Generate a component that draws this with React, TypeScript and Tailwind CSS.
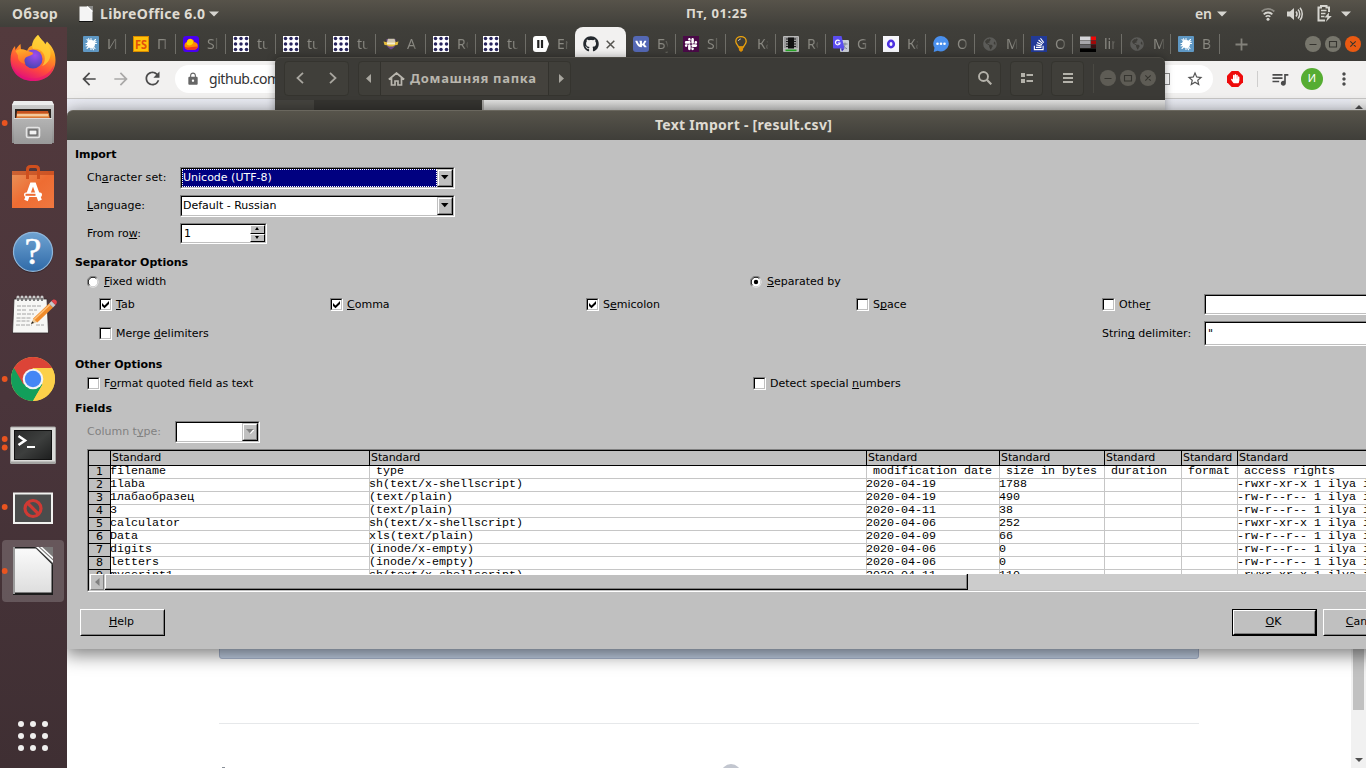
import React from "react";
import { FaGithub, FaVk, FaSlack, FaStackOverflow, FaGlobeAmericas, FaHandPaper } from "react-icons/fa";
import { MdArrowBack, MdArrowForward, MdRefresh, MdLock, MdStarBorder, MdMoreVert, MdQueueMusic } from "react-icons/md";

/* ---------- tab favicons (16x16) ---------- */

function Dots() {
  const p = [2.5, 8, 13.5];
  return (
    <svg width="16" height="16" viewBox="0 0 16 16" className="block">
      <rect width="16" height="16" fill="#fff" />
      {p.map((x) => p.map((y) => <circle key={x + "-" + y} cx={x} cy={y} r="1.75" fill="#26235c" />))}
    </svg>
  );
}

function Splash() {
  return (
    <svg width="16" height="16" viewBox="0 0 16 16" className="block">
      <rect width="16" height="16" rx="1" fill="#5f98c4" />
      <circle cx="8" cy="8" r="4" fill="#fff" />
      <path
        d="M8 2.500v11M3 7.500h10.500M4 3.500l8 9M12.500 3.500L4 12.500M5.500 2.700l5 11M3 10l10-4.500"
        stroke="#fff"
        strokeWidth="1.100"
        strokeLinecap="round"
      />
    </svg>
  );
}

function Favicon({ kind }: { kind: string }) {
  switch (kind) {
    case "dots":
      return <Dots />;
    case "splash":
      return <Splash />;
    case "fs":
      return (
        <svg width="16" height="16" viewBox="0 0 16 16" className="block">
          <rect width="16" height="16" fill="#d98a00" />
          <rect x="1" y="1" width="14" height="14" fill="#ffc20a" />
          <text x="8" y="12.500" textAnchor="middle" fontSize="12" fontWeight="700" textLength="12" lengthAdjust="spacingAndGlyphs" fill="#e2500c" fontFamily="Open Sans, sans-serif">FS</text>
        </svg>
      );
    case "cloud":
      return (
        <svg width="16" height="16" viewBox="0 0 16 16" className="block">
          <rect width="16" height="16" rx="3" fill="#4a00f0" />
          <path d="M1.500 9.500c0-2 1-3 2.300-3.200C4.300 3.500 6.500 2.200 8.300 3c1.800.3 2.500 1.700 3 3 2 .3 3.500 1.500 3.500 4 0 2.200-1.500 3.500-3.500 3.500H5c-2 0-3.500-1.500-3.500-4z" fill="#ff8a00" />
          <path d="M3.500 7.500c.5-3.500 2.500-5 4.800-4.200 2 .7 2.200 3.500 1.200 4.700-1.500 2-5.500 2-6-.5z" fill="#ffd500" />
          <path d="M1.500 10.500c2 1.500 5 1 7.500.5 2 0 4-.5 5.700-.5-.2 2-1.500 3.200-3.400 3.200H5c-1.800 0-3.300-1.300-3.500-3.200z" fill="#f4361c" />
        </svg>
      );
    case "crest":
      return (
        <svg width="16" height="16" viewBox="0 0 16 16" className="block">
          <path d="M3.500 3h9v5c0 2.500-2 4.500-4.500 5.500C5.500 12.500 3.500 10.500 3.500 8z" fill="#6b4a8c" />
          <path d="M5 2.800h6.500l1 3.200H4z" fill="#cfc6b0" />
          <path d="M.5 5.500l3.500.8h8l3.500-.8-1 3.500-2.500.2-2 1.300H6l-2-1.300-2.500-.2z" fill="#e3bb3c" />
          <rect x="4" y="6.300" width="8" height="2.200" fill="#f5efd2" />
        </svg>
      );
    case "pause":
      return (
        <svg width="16" height="16" viewBox="0 0 16 16" className="block">
          <path d="M3 0h8.500c1 0 1.500.5 2 1.300L16 8l-2.500 6.700c-.5.8-1 1.300-2 1.300H3c-2 0-3-1-3-3V3c0-2 1-3 3-3z" fill="#fff" />
          <path d="M5.300 4v8M9 4v8" stroke="#222" strokeWidth="2.200" />
        </svg>
      );
    case "vk":
      return (
        <span className="flex size-4 items-center justify-center rounded-[3px] bg-[#5468b4] text-white">
          <FaVk size={12} />
        </span>
      );
    case "slack":
      return (
        <span className="flex size-4 items-center justify-center bg-[#4a0a48] text-white">
          <FaSlack size={14} />
        </span>
      );
    case "bulb":
      return (
        <svg width="16" height="16" viewBox="0 0 16 16" className="block" fill="none">
          <path d="M5.500 11C5 9 2.800 8 2.800 5.200 2.800 2.300 5.300.7 8 .7s5.200 1.600 5.200 4.500C13.200 8 11 9 10.500 11z" stroke="#f0a50c" strokeWidth="1.300" />
          <path d="M5.500 5c.2-1.200 1-1.900 2.200-2" stroke="#ddd" />
          <path d="M5.500 11h5l-.6 3.500L8 16l-1.900-1.500z" fill="#e09208" />
        </svg>
      );
    case "chip":
      return (
        <svg width="16" height="16" viewBox="0 0 16 16" className="block">
          <rect width="16" height="16" rx="1" fill="#b9b9b9" />
          <rect x="1" y="1" width="14" height="11" fill="#9a9a9a" />
          <path d="M3 3h10M3 5.500h10M3 8h10M3 10.500h10" stroke="#222" strokeWidth="1.200" />
          <rect x="5" y="1.500" width="6" height="11" fill="#111" />
          <rect x="2.500" y="13.500" width="11" height="1.700" fill="#26a526" />
        </svg>
      );
    case "translate":
      return (
        <svg width="16" height="16" viewBox="0 0 16 16" className="block">
          <rect x="7" y="4" width="9" height="12" rx="1" fill="#c9cdd6" />
          <path d="M9.500 8h5M12 6.500V8c0 2-1 3.500-2.500 4.500M10.300 9.500c1 1.800 2 2.500 3.700 3.200" stroke="#7b8494" strokeWidth="1" fill="none" />
          <path d="M1 0h7.500l3 12.500H1c-.6 0-1-.4-1-1V1c0-.6.400-1 1-1z" fill="#5b4df0" />
          <path d="M8 12.500h3.500L9 15.500z" fill="#3b2fc0" />
          <path d="M6.600 5.100A2.300 2.300 0 1 0 7 7H4.800" stroke="#fff" strokeWidth="1.200" fill="none" />
        </svg>
      );
    case "ring":
      return (
        <svg width="16" height="16" viewBox="0 0 16 16" className="block">
          <rect width="16" height="16" fill="#f6f6fb" />
          <ellipse cx="8" cy="8" rx="2.800" ry="3.200" stroke="#4b2fe0" strokeWidth="2.600" fill="none" />
        </svg>
      );
    case "chat":
      return (
        <svg width="16" height="16" viewBox="0 0 16 16" className="block">
          <path d="M8 0a8 7.700 0 1 1-3.300 14.800L.7 16l.8-4.200A7.700 7.700 0 0 1 8 0z" fill="#4a90ee" />
          <circle cx="4.500" cy="7.700" r="1.300" fill="#fff" />
          <circle cx="8" cy="7.700" r="1.300" fill="#fff" />
          <circle cx="11.500" cy="7.700" r="1.300" fill="#fff" />
        </svg>
      );
    case "globe":
      return <FaGlobeAmericas size={14} className="m-px text-[#5b5b58]" />;
    case "stack":
      return (
        <span className="flex size-4 items-center justify-center bg-[#223a97] text-white">
          <FaStackOverflow size={14} />
        </span>
      );
    case "flag":
      return (
        <svg width="16" height="16" viewBox="0 0 16 16" className="block">
          <rect width="10.500" height="3.700" y="0.500" fill="#d4d4d8" />
          <rect width="10.500" height="3.500" y="4.500" fill="#a8a8ac" />
          <rect width="10.500" height="3.500" y="8.500" fill="#66666a" />
          <rect width="16" height="3.500" y="12.500" fill="#000" />
          <rect x="11" y="0.500" width="5" height="3.500" fill="#f00808" />
          <rect x="11" y="4.500" width="5" height="3.500" fill="#a10808" />
          <rect x="11" y="8.500" width="5" height="3.500" fill="#3c1012" />
        </svg>
      );
  }
  return null;
}

const leftTabs: [string, string][] = [
  ["splash", "И"], ["fs", "П"], ["cloud", "Sl"], ["dots", "tu"], ["dots", "tu"],
  ["dots", "tu"], ["crest", "A"], ["dots", "Ro"], ["dots", "tu"], ["pause", "En"],
];
const midTabs: [string, string][] = [
  ["vk", "Бу"], ["slack", "Sl"], ["bulb", "Ка"], ["chip", "Ro"], ["translate", "G"], ["ring", "Ка"], ["chat", "О"],
];
const rightTabs: [string, string][] = [
  ["globe", "М"], ["stack", "O"], ["flag", "lin"], ["globe", "М"], ["splash", "В"],
];

function Tab({ kind, label, narrow, last }: { kind: string; label: string; narrow?: boolean; last?: boolean }) {
  return (
    <div className={"flex h-5 shrink-0 items-center pl-[7px] " + (narrow ? "w-[49px]" : "w-[50px]") + (last ? "" : " border-r border-[#6f6e68]")}>
      <Favicon kind={kind} />
      <span className="ml-2 w-[11px] overflow-hidden whitespace-nowrap font-['Noto_Sans'] text-[14px] leading-5 text-[#8a8982] [mask-image:linear-gradient(90deg,#000_55%,rgba(0,0,0,0.25))]">
        {label}
      </span>
    </div>
  );
}

/* ---------- window controls ---------- */

function Controls({ dim }: { dim?: boolean }) {
  const ring = dim ? "#5e5c55" : "#77766c";
  const line = "#35342f";
  return (
    <svg width="58" height="18" viewBox="0 0 58 18" className="block shrink-0">
      <circle cx="9" cy="9" r="8" fill={ring} />
      <circle cx="29" cy="9" r="8" fill={ring} />
      <circle cx="49" cy="9" r="8" fill={dim ? ring : "#ea5a12"} />
      <path d="M5.500 9.500h7M25.500 6.500h7v5.500h-7zM46.300 6.300l5.400 5.400M51.700 6.300l-5.400 5.400" stroke={line} strokeWidth="1.100" fill="none" />
    </svg>
  );
}

/* ---------- top bar ---------- */

function Caret() {
  return (
    <svg width="10" height="6" viewBox="0 0 10 6" className="block">
      <path d="M0 .5h10L5 5.500z" fill="#d6d5d0" />
    </svg>
  );
}

function TopBar() {
  return (
    <div className="relative z-40 flex h-[27px] w-full items-center bg-linear-to-b from-[#57534a] to-[#403f3a] font-['Noto_Sans'] text-[14px] font-bold text-[#dfdbd2]">
      <span className="ml-3 w-[67px] text-[14px] tracking-[0.3px]">Обзор</span>
      <svg width="14" height="16" viewBox="0 0 14 16" className="block">
        <path d="M.5.500h9l4 4v11H.5z" fill="#f4f4f4" />
        <path d="M8 0h6v6z" fill="#8c8c8a" />
        <path d="M8 .5l5.500 5" stroke="#fff" strokeWidth="1.200" />
        <path d="M0 15.500h14" stroke="#111" />
      </svg>
      <span className="ml-[7px] w-[106px] whitespace-nowrap tracking-[0.32px]">LibreOffice 6.0</span>
      <span className="ml-[3px]"><Caret /></span>
      <span className="ml-[467px] w-[64px] whitespace-nowrap text-[13px] tracking-[0.6px]">Пт, 01:25</span>
      <span className="ml-auto mr-[5px] font-semibold">en</span>
      <Caret />
      <svg width="14" height="14" viewBox="0 0 14 14" fill="none" className="ml-[34px] block">
        <path d="M.7 4.500a9 9 0 0 1 12.600 0" stroke="#8d8b84" strokeWidth="1.800" />
        <path d="M2.700 7.300a6 6 0 0 1 8.600 0" stroke="#d6d5d0" strokeWidth="1.800" />
        <path d="M4.700 9.800a3.200 3.200 0 0 1 4.600 0" stroke="#d6d5d0" strokeWidth="1.600" />
        <circle cx="7" cy="12.200" r="1.500" fill="#d6d5d0" />
      </svg>
      <svg width="16" height="14" viewBox="0 0 16 14" fill="none" className="ml-[12px] block">
        <path d="M0 4.500h3L7 1v12L3 9.500H0z" fill="#d6d5d0" />
        <path d="M9 4.500c1.200 1.400 1.200 3.600 0 5M11 2.500c2.300 2.500 2.300 6.500 0 9M13 .8c3 3.500 3 8.900 0 12.400" stroke="#d6d5d0" strokeWidth="1.500" />
      </svg>
      <svg width="15" height="17" viewBox="0 0 15 17" fill="none" className="ml-[14px] block">
        <path d="M12 7V2.500H9.500V1H4v1.500H1.500v13H8" stroke="#d6d5d0" strokeWidth="2" />
        <path d="M4 5.500h5.500M4 8.500h4.500M4 11.500h3.500" stroke="#d6d5d0" strokeWidth="1.700" />
        <path d="M12 7.500L7.500 12.600h3L8.800 17l6-6h-3z" fill="#d6d5d0" />
      </svg>
      <span className="ml-[9px] mr-[15px]"><Caret /></span>
    </div>
  );
}

/* ---------- dock ---------- */

function DockItem({ dots = [], active, children }: { dots?: number[]; active?: boolean; children: React.ReactNode }) {
  return (
    <svg width="67" height="64" viewBox="0 0 67 64" className="block shrink-0">
      {active && <rect x="2" y="1" width="62" height="62" rx="4" fill="#fff" fillOpacity="0.180" />}
      {dots.map((y) => <circle key={y} cx="4.700" cy={y} r="2.900" fill="#e95420" />)}
      {children}
    </svg>
  );
}

function Dock() {
  return (
    <div className="flex w-[67px] shrink-0 flex-col bg-linear-to-b from-[#533a3d] via-[#4a353b] to-[#3f2f33]">
      <svg width="0" height="0" className="absolute">
        <defs>
          <linearGradient id="ff" x1="0.800" y1="0" x2="0.400" y2="1">
            <stop offset="0" stopColor="#fff44f" /><stop offset="0.350" stopColor="#ffa01e" /><stop offset="0.700" stopColor="#ff4a3c" /><stop offset="1" stopColor="#e2107a" />
          </linearGradient>
          <linearGradient id="ff2" x1="0" y1="0" x2="0.300" y2="1">
            <stop offset="0" stopColor="#ffb52a" /><stop offset="1" stopColor="#ff6a2a" />
          </linearGradient>
          <radialGradient id="ffp" cx="0.600" cy="0.300" r="0.700">
            <stop offset="0" stopColor="#a04cf0" /><stop offset="1" stopColor="#4a45b4" />
          </radialGradient>
          <linearGradient id="cab" x1="0" y1="0" x2="0" y2="1"><stop offset="0" stopColor="#d2d2d2" /><stop offset="1" stopColor="#8c8c8c" /></linearGradient>
          <linearGradient id="front" x1="0" y1="0" x2="0" y2="1"><stop offset="0" stopColor="#b4b4b4" /><stop offset="1" stopColor="#999" /></linearGradient>
          <linearGradient id="bag" x1="0" y1="0" x2="1" y2="1"><stop offset="0" stopColor="#e8935a" /><stop offset="0.500" stopColor="#ee6c32" /><stop offset="1" stopColor="#f07840" /></linearGradient>
          <linearGradient id="hlp" x1="0" y1="0" x2="0" y2="1"><stop offset="0" stopColor="#6fa3d2" /><stop offset="1" stopColor="#2f6aa8" /></linearGradient>
          <linearGradient id="scr" x1="0" y1="0" x2="1" y2="1"><stop offset="0" stopColor="#2a2b2b" /><stop offset="0.500" stopColor="#3d3f3e" /><stop offset="1" stopColor="#1e1f1f" /></linearGradient>
          <linearGradient id="pap" x1="0" y1="0" x2="0" y2="1"><stop offset="0" stopColor="#fafafa" /><stop offset="1" stopColor="#dedede" /></linearGradient>
        </defs>
      </svg>

      <DockItem>
        <path d="M38 8c1.500 2 3 4.500 5.500 6.500 1 1 1.500 2 1.500 3l2-3c5 5 8.500 10 8.500 18.500C55.500 46 46 54 33 54S10.500 45 10.500 32.500C10.500 27 12 22 15 19l.5 4c1.500-2.500 3-4.500 5-6l.5 5.500c2 0 4 .5 6 1.500 1-3 3-5 5-5.500 1-4 3-8 6-10.500z" fill="url(#ff)" />
        <path d="M11 34c1.500 8 8 15.500 17 17 12 2 22-4 26-13-1 10-9 16-21 16-13 0-22-9-22-20z" fill="#e2107a" fillOpacity="0.450" />
        <path d="M38 8c-5 4-7 9-5 14 4-1 8 1 10 4 3 4 2 10-1 13 5-2 8-6 8.500-11 .5-5-1-8-4-11l-1.500.5c0-2-4-5-7-9.500z" fill="#ffcf36" fillOpacity="0.800" />
        <circle cx="33" cy="32" r="9.500" fill="url(#ffp)" />
        <path d="M15.500 24c3-2 7-2.500 11-.5l6 2c1 .5.500 2-1 2.500l-5 2c-3 2-2 5-1 7-6-1-8-5-7.500-8.500z" fill="url(#ff2)" />
      </DockItem>

      <DockItem dots={[32]}>
        <path d="M14 10h38l2 4v38H12V14z" fill="url(#cab)" />
        <path d="M14 10h38l2 4H12z" fill="#ededed" />
        <rect x="15" y="18" width="36" height="9" fill="#2b2521" />
        <path d="M17 20h31l2 7H16z" fill="#c65220" />
        <path d="M17 22.500h32v4H17z" fill="#e89a54" />
        <path d="M17 24h31" stroke="#fbe8cf" strokeWidth="1.200" />
        <rect x="14" y="27" width="38" height="26" fill="url(#front)" />
        <path d="M14 27.500h38" stroke="#dcdcdc" />
        <rect x="26.500" y="36.500" width="13" height="10" rx="1.500" fill="#9a9a9a" stroke="#e4e4e4" strokeWidth="1.600" />
        <rect x="29" y="39" width="8" height="5" fill="#f2f2f2" stroke="#555" />
      </DockItem>

      <DockItem>
        <path d="M12 16h42v37H12z" fill="url(#bag)" />
        <path d="M12 16h42v4H12z" fill="#b8431a" fillOpacity="0.600" />
        <path d="M27.500 24V14.500c0-2 1-3 3-3h5c2 0 3 1 3 3V24" stroke="#cf4f1e" strokeWidth="3" fill="none" />
        <path d="M26 45.500L31.700 29.500h2.600L40 45.500" stroke="#fff" strokeWidth="3.800" fill="none" />
        <rect x="24" y="37.500" width="18" height="4.500" rx="2" fill="#fff" />
        <rect x="25.500" y="38.800" width="10" height="2" fill="#ee6c32" />
      </DockItem>

      <DockItem>
        <circle cx="33" cy="34" r="20" fill="#1d1416" fillOpacity="0.400" />
        <circle cx="33" cy="32.800" r="19.500" fill="url(#hlp)" stroke="#8fb6da" strokeWidth="1.200" />
        <text x="33" y="45" textAnchor="middle" fontSize="38" fill="#fff" stroke="#fff" strokeWidth="0.500" fontFamily="Liberation Serif, serif">?</text>
      </DockItem>

      <DockItem>
        <path d="M14 16h33l1.500 34h-36z" fill="#f7f7f5" stroke="#2e2628" strokeWidth="0.800" />
        <path d="M18 16v-2M22 16v-2M26 16v-2M30 16v-2M34 16v-2M38 16v-2M42 16v-2" stroke="#ccc" strokeWidth="3" strokeLinecap="round" />
        <path d="M18 18v-3M22 18v-3M26 18v-3M30 18v-3M34 18v-3M38 18v-3M42 18v-3" stroke="#444" strokeWidth="1.300" />
        <path d="M17 23h25M17 27h10M29 27h8M17 31h17M16.500 35h15M16.500 38h13M16 42h16M36 42h8" stroke="#a4a4a4" strokeWidth="1" strokeDasharray="4 1" />
        <path d="M31 41l2.500-6 4 4z" fill="#e9c99a" />
        <path d="M31 41l1.200-2.800 1.800 1.800z" fill="#222" />
        <path d="M33.200 35.500L49 20.500l4 4-15.700 15z" fill="#f08c2c" />
        <path d="M34.200 36.500L50 21.500" stroke="#ffc37c" strokeWidth="1.400" />
        <path d="M49 20.500l2.500-2.500 4 4-2.500 2.500z" fill="#c9c9c9" />
        <path d="M51.500 18c1-1.500 3-2 4.500-.8 1.500 1.300 1 3.300-.5 4.800z" fill="#e2444a" />
      </DockItem>

      <DockItem dots={[32]}>
        <circle cx="33" cy="32" r="22" fill="#fcd04a" />
        <path d="M33 32L13.950 21A22 22 0 0 0 33 54l9.500-16.500z" fill="#129f5b" />
        <path d="M13.950 21A22 22 0 0 1 52.050 21H33L23.500 37.500z" fill="#dc4437" />
        <path d="M33 54A22 22 0 0 0 52.050 21H33l9.500 16.500z" fill="#fcd04a" />
        <circle cx="33" cy="32" r="10.300" fill="#f3f3f3" />
        <circle cx="33" cy="32" r="8.200" fill="#4486f5" />
      </DockItem>

      <DockItem dots={[28, 36.500]}>
        <rect x="10" y="15.500" width="46" height="37.500" rx="1.500" fill="#a5a5a3" />
        <rect x="11" y="16.500" width="44" height="34" fill="#dcdcda" />
        <rect x="14" y="19" width="38" height="30" fill="#111" />
        <rect x="15" y="20" width="36" height="28" fill="url(#scr)" />
        <path d="M18.500 25l6.500 4.500-6.500 4.500" stroke="#fff" strokeWidth="2.600" fill="none" />
        <path d="M27 36h8" stroke="#fff" strokeWidth="2" />
      </DockItem>

      <DockItem dots={[32]}>
        <rect x="13" y="17.500" width="40" height="31.500" fill="#f2f2f0" />
        <rect x="15" y="19.500" width="36" height="27.500" fill="#4b4c4c" />
        <circle cx="33" cy="33.500" r="8" stroke="#cf3a34" strokeWidth="3.200" fill="none" />
        <path d="M27.500 28l11 11" stroke="#cf3a34" strokeWidth="3.200" />
      </DockItem>

      <DockItem dots={[32]} active>
        <path d="M13 8h40v48H13z" fill="#1c1c1c" />
        <path d="M13 8h2v47h-2z" fill="#9b9b9b" />
        <path d="M15 9.500h21L51.500 25v28.500H15z" fill="url(#pap)" />
        <path d="M36 8h17v17z" fill="#7a7878" />
        <path d="M34.500 8H38l15 14.500V26z" fill="#444" />
        <path d="M36 8h2.500L53 21.500V24z" fill="#fff" />
        <path d="M40 8h2.200L53 18v2z" fill="#fff" />
      </DockItem>

      <svg width="67" height="64" viewBox="0 0 67 64" className="mt-auto block shrink-0">
        {[21, 33, 45].map((x) => [20, 32, 44].map((y) => <circle key={x + "-" + y} cx={x} cy={y} r="3" fill="#f0efee" />))}
      </svg>
    </div>
  );
}

/* ---------- browser ---------- */

function Browser() {
  return (
    <div className="relative flex h-full min-w-0 flex-1 flex-col bg-white">
      <div className="flex h-[34px] shrink-0 items-center bg-linear-to-b from-[#403f3a] to-[#3b3a36] pl-[9px]">
        {leftTabs.map(([k, l], i) => <Tab key={i} kind={k} label={l} />)}
        <div className="-ml-px flex h-[34px] w-[51px] shrink-0 items-center rounded-t-lg bg-[#f2f1f0] pl-2 text-[#24292e]">
          <FaGithub size={16} />
          <svg width="9" height="9" viewBox="0 0 9 9" className="ml-[7px] block">
            <path d="M.7.700l7.600 7.600M8.300.700L.7 8.300" stroke="#55544f" strokeWidth="1.500" />
          </svg>
        </div>
        {midTabs.map(([k, l], i) => <Tab key={i} kind={k} label={l} narrow={i === 6} />)}
        {rightTabs.map(([k, l], i) => <Tab key={i} kind={k} label={l} narrow />)}
        <svg width="13" height="13" viewBox="0 0 13 13" className="ml-[15px] block shrink-0">
          <path d="M6.500.500v12M.5 6.500h12" stroke="#83827b" strokeWidth="1.800" />
        </svg>
        <div className="ml-auto mr-[4px]"><Controls /></div>
      </div>
      <div className="flex h-[38px] shrink-0 items-center border-b border-[#c9c8c7] bg-[#f2f1f0] pb-[2px] pl-[12px] text-[#4b4b4b]">
        <MdArrowBack size={20} />
        <MdArrowForward size={20} className="ml-[12px] text-[#a9a8a7]" />
        <MdRefresh size={21} className="ml-[11px]" />
        <div className="ml-[12px] flex h-7 w-[1038px] items-center rounded-full bg-white pl-[11px] pr-[9px]">
          <MdLock size={14} className="text-[#666]" />
          <span className="ml-[9px] font-['Noto_Sans'] text-[14px] tracking-[-0.45px] text-[#333]">github.com</span>
          <span className="ml-auto mr-[16px] size-3 border border-[#888] text-[8px]" />
          <MdStarBorder size={18} className="text-[#555]" />
        </div>
        <svg width="16" height="16" viewBox="0 0 16 16" className="ml-[14px] block">
          <path d="M4.700 0h6.600L16 4.700v6.600L11.300 16H4.700L0 11.300V4.700z" fill="#ee0b0b" />
          <g transform="translate(3.500 3)"><FaHandPaper size={9.5} color="#fff" /></g>
        </svg>
        <span className="ml-[14px] h-4 w-px bg-[#cfcecd]" />
        <MdQueueMusic size={20} className="ml-[12px]" />
        <span className="ml-[11px] flex size-[22px] items-center justify-center rounded-full bg-[#56ad32] font-['Noto_Sans'] text-[11px] text-white">И</span>
        <MdMoreVert size={20} className="ml-[11px]" />
      </div>
      <div className="flex min-h-0 flex-1">
        <div className="flex flex-1 flex-col bg-linear-to-b from-[#eceef6] via-white via-10% to-white pl-[152px]">
          <div className="mt-[40px] h-[520px] w-[980px] shrink-0 rounded-[3px] border border-[#a9b6cf] bg-[#c3d1e6]" />
          <div className="mt-[64px] h-px w-[980px] bg-[#e6e8ea]" />
          <div className="mt-[40px] flex h-1 w-[980px] overflow-hidden pl-[3px]">
            <div className="mt-[3px] h-px w-[3px] bg-[#8a9099]" />
            <div className="ml-[496px] h-5 w-5 shrink-0 rounded-full bg-[#c2c6cf]" />
          </div>
        </div>
        <div className="flex w-[15px] flex-col items-center bg-[#f1f1f1] pt-[6px]">
          <svg width="8" height="4" viewBox="0 0 8 4" className="block"><path d="M4 0l4 4H0z" fill="#505050" /></svg>
          <div className="mt-[4px] h-[597px] w-[11px] bg-[#c1c1c1]" />
          <svg width="8" height="4" viewBox="0 0 8 4" className="mt-auto mb-[6px] block"><path d="M0 0h8L4 4z" fill="#505050" /></svg>
        </div>
      </div>
    </div>
  );
}

/* ---------- file manager ---------- */

function Files() {
  return (
    <div className="absolute left-[275px] top-[57px] flex h-[80px] w-[890px] flex-col overflow-hidden rounded-t-md border-t border-[#4c4a44] bg-[#3c3b37] shadow-[0_0_8px_rgba(0,0,0,0.35)]">
      <div className="flex h-[42px] shrink-0 items-center pb-[2px] pl-[9px] text-[#a8a69f]">
        <div className="flex h-[35px] w-[65px] items-center justify-between rounded-[4px] border border-[#35342f] bg-[#403f3a] px-[11px]">
          <svg width="8" height="12" viewBox="0 0 8 12"><path d="M7 .8L1.500 6 7 11.200" stroke="currentColor" strokeWidth="1.800" fill="none" /></svg>
          <svg width="8" height="12" viewBox="0 0 8 12"><path d="M1 .8L6.500 6 1 11.200" stroke="currentColor" strokeWidth="1.800" fill="none" /></svg>
        </div>
        <div className="ml-[9px] flex h-[35px] w-[213px] items-center rounded-[4px] border border-[#35342f] bg-[#403f3a]">
          <span className="flex w-[21px] justify-center pr-[3px]"><svg width="5" height="9" viewBox="0 0 5 9"><path d="M5 0v9L0 4.500z" fill="currentColor" /></svg></span>
          <div className="flex h-full w-[169px] items-center border-x border-[#33322d] bg-[#44423d] pl-[7px] pt-[2px]">
            <svg width="17" height="14" viewBox="0 0 17 14" fill="none"><path d="M.8 7.500L8.500 1l7.700 6.500M3.500 6v7h3.500V9h3v4h3.500V6" stroke="#b9b6ae" strokeWidth="1.700" /></svg>
            <span className="ml-[5px] whitespace-nowrap font-['Noto_Sans'] text-[13px] font-bold tracking-[0.7px] text-[#b9b6ae]">Домашняя папка</span>
          </div>
          <span className="flex w-[21px] justify-center pl-[3px]"><svg width="5" height="9" viewBox="0 0 5 9"><path d="M0 0v9l5-4.500z" fill="currentColor" /></svg></span>
        </div>
        <div className="ml-auto flex h-[35px] w-[33px] items-center justify-center rounded-[4px] border border-[#35342f] bg-[#403f3a]">
          <svg width="14" height="14" viewBox="0 0 14 14" fill="none"><circle cx="5.500" cy="5.500" r="4.500" stroke="#b4b2aa" strokeWidth="1.900" /><path d="M8.800 8.800l4.500 4.500" stroke="#b4b2aa" strokeWidth="2.200" /></svg>
        </div>
        <div className="ml-[9px] flex h-[35px] w-[33px] items-center justify-center rounded-[4px] border border-[#35342f] bg-[#403f3a]">
          <svg width="12" height="10" viewBox="0 0 12 10"><path d="M0 0h4v4H0zM0 6h4v4H0zM5.500 1H12v2H5.500zM5.500 7H12v2H5.500z" fill="#b4b2aa" /></svg>
        </div>
        <div className="ml-[8px] flex h-[35px] w-[33px] items-center justify-center rounded-[4px] border border-[#35342f] bg-[#403f3a]">
          <svg width="10" height="10" viewBox="0 0 10 10"><path d="M0 1h10M0 5h10M0 9h10" stroke="#b4b2aa" strokeWidth="2" /></svg>
        </div>
        <span className="ml-[9px] h-[29px] w-px bg-[#4a4943]" />
        <div className="ml-[5px] mr-[8px]"><Controls dim /></div>
      </div>
      <div className="flex flex-1">
        <div className="w-[39px] bg-[#464540]" />
        <div className="w-[168px] bg-[#363531]" />
        <div className="w-[2px] bg-[#aaa9a6]" />
        <div className="flex-1 bg-linear-to-b from-[#e6e6e5] to-[#8d8d8c]" />
      </div>
    </div>
  );
}

/* ---------- import dialog ---------- */

const sunken = "border border-t-[#808080] border-l-[#808080] border-r-white border-b-white";
const sunkenInner = "border border-t-black border-l-black border-r-[#c0c0c0] border-b-[#c0c0c0]";

function Label({ text, k, dim }: { text: string; k?: number; dim?: boolean }) {
  return (
    <span className={"whitespace-pre " + (dim ? "text-[#808080]" : "")}>
      {k === undefined ? text : (
        <>
          {text.slice(0, k)}
          <span className="underline decoration-1 underline-offset-[1px] [text-decoration-skip-ink:none]">{text[k]}</span>
          {text.slice(k + 1)}
        </>
      )}
    </span>
  );
}

function Field({ className, children }: { className: string; children?: React.ReactNode }) {
  return (
    <div className={"shrink-0 " + sunken + " " + className}>
      <div className={"flex h-full w-full bg-white " + sunkenInner}>{children}</div>
    </div>
  );
}

function ArrowButton({ dim }: { dim?: boolean }) {
  return (
    <div className="h-full w-[16px] shrink-0 border border-t-[#c0c0c0] border-l-[#c0c0c0] border-b-black border-r-black">
      <div className="flex h-full w-full items-center justify-center border border-t-white border-l-white border-b-[#808080] border-r-[#808080] bg-[#c0c0c0] pb-px pr-px">
        <svg width="8" height="5" viewBox="0 0 8 5" className="block shrink-0">
          {dim && <path d="M1 1h7.500L4.700 5z" fill="#fff" />}
          <path d="M0 0h7.500L3.750 4.200z" fill={dim ? "#808080" : "#000"} />
        </svg>
      </div>
    </div>
  );
}

function Check({ on, text, k }: { on?: boolean; text: string; k: number }) {
  return (
    <div className="flex items-center gap-[4px]">
      <Field className="size-[13px]">
        {on && (
          <svg width="9" height="9" viewBox="0 0 9 9" className="block">
            <path d="M1 3l2.500 2.500L8 1v3L3.500 8.200 1 6z" fill="#000" />
          </svg>
        )}
      </Field>
      <Label text={text} k={k} />
    </div>
  );
}

function Radio({ on, text }: { on?: boolean; text: string }) {
  return (
    <div className="flex items-center gap-[5px]">
      <svg width="12" height="12" viewBox="0 0 12 12" className="block shrink-0">
        <circle cx="6" cy="6" r="5.500" fill="#fff" />
        <path d="M1.800 10.200A5.600 5.600 0 0 1 10.200 1.800" stroke="#808080" fill="none" />
        <path d="M2.600 9.400A4.700 4.700 0 0 1 9.400 2.600" stroke="#000" fill="none" />
        <path d="M2.600 9.400A4.700 4.700 0 0 0 9.400 2.600" stroke="#c8c8c8" fill="none" />
        {on && <circle cx="6" cy="6" r="2.200" fill="#000" />}
      </svg>
      <Label text={text} k={0} />
    </div>
  );
}

function Button({ text, className }: { text: string; className: string }) {
  return (
    <div className={"shrink-0 border border-t-white border-l-white border-r-black border-b-black " + className}>
      <div className="flex h-full w-full items-center justify-center border border-t-transparent border-l-transparent border-r-[#808080] border-b-[#808080] pb-[2px] pr-[2px]">
        <Label text={text} k={0} />
      </div>
    </div>
  );
}

const header = ["Standard", "Standard", "Standard", "Standard", "Standard", "Standard", "Standard"];
const rows: string[][] = [
  ["filename", " type", " modification date", " size in bytes", " duration", " format", " access rights"],
  ["1laba", "sh(text/x-shellscript)", "2020-04-19", "1788", "", "", "-rwxr-xr-x 1 ilya ilya"],
  ["1лабаобразец", "(text/plain)", "2020-04-19", "490", "", "", "-rw-r--r-- 1 ilya ilya"],
  ["3", "(text/plain)", "2020-04-11", "38", "", "", "-rw-r--r-- 1 ilya ilya"],
  ["calculator", "sh(text/x-shellscript)", "2020-04-06", "252", "", "", "-rwxr-xr-x 1 ilya ilya"],
  ["Data", "xls(text/plain)", "2020-04-09", "66", "", "", "-rw-r--r-- 1 ilya ilya"],
  ["digits", "(inode/x-empty)", "2020-04-06", "0", "", "", "-rw-r--r-- 1 ilya ilya"],
  ["letters", "(inode/x-empty)", "2020-04-06", "0", "", "", "-rw-r--r-- 1 ilya ilya"],
  ["myscript1", "sh(text/x-shellscript)", "2020-04-11", "110", "", "", "-rwxr-xr-x 1 ilya ilya"],
];
const cols = "grid grid-cols-[22px_259px_497px_133px_105px_77px_56px_1fr]";

function Preview() {
  return (
    <div className="ml-[20px] mt-[6px] h-[143px] w-[1321px] border border-b-white border-l-[#808080] border-r-white border-t-[#808080]">
      <div className="flex h-full flex-col border border-b-[#c0c0c0] border-l-black border-r-[#c0c0c0] border-t-black">
        <div className={cols + " h-[15px] shrink-0 border-b border-black bg-[#c0c0c0]"}>
          <div className="border-r border-black" />
          {header.map((h, i) => (
            <div key={i} className="whitespace-nowrap border-r border-black pl-px leading-[13px] tracking-[-0.1px]">{h}</div>
          ))}
        </div>
        <div className="h-[108px] shrink-0 overflow-hidden bg-white">
          {rows.map((r, i) => (
            <div key={i} className={cols + " h-[13px]"}>
              <div className="h-[13px] border-b border-r border-black bg-[#c0c0c0] text-center leading-[12px]">{i + 1}</div>
              {r.map((c, j) => (
                <div key={j} className="h-[13px] whitespace-pre border-b border-r border-[#c6c6c6] font-['Liberation_Mono'] text-[11.67px] leading-[10px]">
                  <span className="-ml-px">{c}</span>
                </div>
              ))}
            </div>
          ))}
        </div>
        <div className="flex h-[16px] shrink-0 bg-[#cccccc]">
          <div className="ml-px flex w-[14px] items-center justify-center border border-b-[#808080] border-l-white border-r-[#808080] border-t-white bg-[#c0c0c0]">
            <svg width="5" height="8" viewBox="0 0 5 8"><path d="M4.500 0v8L0 4z" fill="#808080" /></svg>
          </div>
          <div className="ml-px w-[863px] border-b border-r border-black bg-[#c0c0c0]">
            <div className="h-full border border-b-[#808080] border-l-white border-r-[#808080] border-t-white" />
          </div>
        </div>
      </div>
    </div>
  );
}

function Dialog() {
  return (
    <div className="absolute left-[67px] top-[110px] flex h-[539px] w-[1353px] flex-col rounded-t-md bg-[#c0c0c0] font-['DejaVu_Sans'] text-[11px] leading-[13px] text-black shadow-[0_4px_18px_2px_rgba(0,0,0,0.5)]">
      <div className="flex h-[30px] shrink-0 items-center justify-center rounded-t-md border-t border-[#6a675e] bg-linear-to-b from-[#57544b] to-[#3f3e39] pb-[2px] font-['Noto_Sans'] text-[14px] font-bold text-[#dfdbd2]">
        <span className="tracking-[0.28px]">Text Import - [result.csv]</span>
      </div>
      <div className="flex h-[27px] shrink-0 items-center pl-[8px] pt-px font-bold tracking-[-0.05px]">Import</div>
      <div className="grid grid-cols-[93px_1fr] gap-y-[6px] pl-[20px]">
        <div className="flex items-center pb-px tracking-[0.08px]"><Label text="Character set:" k={2} /></div>
        <Field className="h-[22px] w-[275px]">
          <div className="flex flex-1 items-center border border-dotted border-white bg-[#000080] pb-px text-white">Unicode (UTF-8)</div>
          <ArrowButton />
        </Field>
        <div className="flex items-center pb-px"><Label text="Language:" k={0} /></div>
        <Field className="h-[22px] w-[275px]">
          <div className="flex flex-1 items-center pb-px pl-px">Default - Russian</div>
          <ArrowButton />
        </Field>
        <div className="flex items-center"><Label text="From row:" k={7} /></div>
        <Field className="h-[21px] w-[87px]">
          <div className="flex flex-1 items-center pl-[2px]">1</div>
          <div className="flex h-full w-[15px] flex-col">
            {["M0 3h4L2 0z", "M0 0h4L2 3z"].map((d) => (
              <div key={d} className="flex flex-1 items-center justify-center border border-b-black border-l-white border-r-black border-t-white bg-[#c0c0c0] pb-px pr-px">
                <svg width="4" height="3" viewBox="0 0 4 3" className="block"><path d={d} fill="#000" /></svg>
              </div>
            ))}
          </div>
        </Field>
      </div>
      <div className="mt-[8px] flex h-[20px] shrink-0 items-center pl-[8px] font-bold tracking-[-0.05px]">Separator Options</div>
      <div className="mt-[3px] grid h-[12px] shrink-0 grid-cols-[663px_1fr] items-center pl-[20px]">
        <Radio text="Fixed width" />
        <Radio on text="Separated by" />
      </div>
      <div className="mt-[7px] grid h-[21px] shrink-0 grid-cols-[231px_256px_270px_246px_102px_1fr] items-center pl-[32px]">
        <Check on text="Tab" k={0} />
        <Check on text="Comma" k={0} />
        <Check on text="Semicolon" k={1} />
        <Check text="Space" k={1} />
        <Check text="Other" k={4} />
        <Field className="h-[21px] w-[204px]" />
      </div>
      <div className="mt-[6px] grid h-[25px] shrink-0 grid-cols-[1003px_102px_1fr] items-center pl-[32px]">
        <Check text="Merge delimiters" k={6} />
        <Label text="String delimiter:" k={5} />
        <Field className="h-[25px] w-[204px]"><span className="pl-[2px] pt-[4px]">"</span></Field>
      </div>
      <div className="mt-[8px] flex h-[20px] shrink-0 items-center pl-[8px] font-bold">Other Options</div>
      <div className="mt-[3px] grid h-[13px] shrink-0 grid-cols-[666px_1fr] items-center pl-[20px]">
        <Check text="Format quoted field as text" k={1} />
        <Check text="Detect special numbers" k={15} />
      </div>
      <div className="mt-[8px] flex h-[20px] shrink-0 items-center pl-[8px] font-bold">Fields</div>
      <div className="mt-[3px] flex h-[22px] shrink-0 items-center pl-[20px]">
        <div className="w-[88px] pb-[2px]"><Label text="Column type:" k={8} dim /></div>
        <Field className="h-[22px] w-[85px]">
          <div className="flex-1" />
          <ArrowButton dim />
        </Field>
      </div>
      <Preview />
      <div className="mt-[17px] flex h-[27px] shrink-0 pl-[13px] pr-[12px]">
        <Button text="Help" className="h-[27px] w-[85px]" />
        <div className="ml-auto border border-black">
          <Button text="OK" className="h-[25px] w-[83px]" />
        </div>
        <Button text="Cancel" className="ml-[6px] h-[27px] w-[85px]" />
      </div>
    </div>
  );
}

export default function App() {
  return (
    <div className="relative flex h-[768px] w-[1366px] flex-col overflow-hidden bg-white">
      <TopBar />
      <div className="flex h-[741px]">
        <div className="relative z-30 flex h-full"><Dock /></div>
        <Browser />
      </div>
      <Files />
      <Dialog />
    </div>
  );
}
